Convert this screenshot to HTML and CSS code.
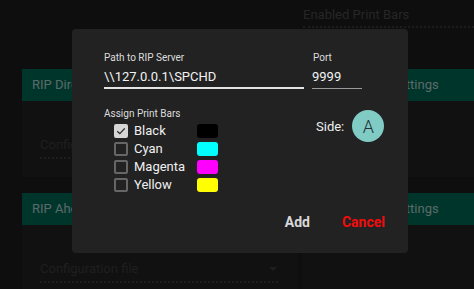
FILE: index.html
```html
<!DOCTYPE html>
<html lang="en">
<head>
  <meta charset="UTF-8" />
  <meta name="viewport" content="width=device-width, initial-scale=1.0"/>
  <title>RIP Settings</title>
  <link rel="stylesheet" href="styles.css">
</head>
<body>
  <!-- Conteúdo da página por trás do diálogo -->
  <div class="pagina">
    <div class="topo">
      <div class="campo-topo">Enabled Print Bars</div>
    </div>

    <div class="grade">
      <div class="cartao">
        <div class="cartao-titulo">RIP Directory</div>
        <div class="cartao-corpo">
          <div class="campo-fundo">Configuration file</div>
        </div>
      </div>
      <div class="cartao">
        <div class="cartao-titulo direita">Print Bar Settings</div>
        <div class="cartao-corpo"></div>
      </div>

      <div class="cartao">
        <div class="cartao-titulo">RIP Ahead Settings</div>
        <div class="cartao-corpo">
          <div class="campo-fundo">Configuration file <span class="seta"></span></div>
        </div>
      </div>
      <div class="cartao">
        <div class="cartao-titulo direita">Print Bar Settings</div>
        <div class="cartao-corpo"></div>
      </div>
    </div>
  </div>

  <!-- Fundo escurecido -->
  <div class="overlay"></div>

  <!-- Diálogo -->
  <div class="dialogo">
    <div class="linha-campos">
      <div class="campo campo-caminho">
        <label>Path to RIP Server</label>
        <div class="valor">\\127.0.0.1\SPCHD</div>
      </div>
      <div class="campo campo-porta">
        <label>Port</label>
        <div class="valor">9999</div>
      </div>
    </div>

    <div class="linha-barras">
      <div class="barras">
        <div class="barras-titulo">Assign Print Bars</div>
        <ul class="lista-barras">
          <li><span class="caixa marcada">
            <svg width="12" height="12" viewBox="0 0 12 12"><path d="M1.5 6.2 L4.6 9.2 L10.5 2.8" fill="none" stroke="#2a2a2a" stroke-width="1.6"/></svg>
          </span><span class="nome">Black</span><span class="cor" style="background:#000000"></span></li>
          <li><span class="caixa"></span><span class="nome">Cyan</span><span class="cor" style="background:#00ffff"></span></li>
          <li><span class="caixa"></span><span class="nome">Magenta</span><span class="cor" style="background:#ff00ff"></span></li>
          <li><span class="caixa"></span><span class="nome">Yellow</span><span class="cor" style="background:#ffff00"></span></li>
        </ul>
      </div>
      <div class="lado">
        <span>Side:</span>
        <span class="circulo">A</span>
      </div>
    </div>

    <div class="acoes">
      <button class="btn-add">Add</button>
      <button class="btn-cancelar">Cancel</button>
    </div>
  </div>
</body>
</html>
```

FILE: styles.css
```css
/* Estilo geral */
body {
  margin: 0;
  width: 474px;
  height: 289px;
  overflow: hidden;
  background-color: #1c1c1c;
  font-family: Roboto, "Liberation Sans", sans-serif;
  position: relative;
}

.pagina {
  padding-left: 22px;
}

/* Campo do topo à direita */
.topo {
  height: 69px;
  padding-left: 281px;
}

.campo-topo {
  padding-top: 6px;
  font-size: 13px;
  line-height: 18px;
  color: #4c4c4c;
  height: 20px;
  border-bottom: 2px dotted #3a3a3a;
}

/* Grade de cartões */
.grade {
  display: grid;
  grid-template-columns: 276px 200px;
  column-gap: 4px;
  row-gap: 16px;
}

.cartao {
  background-color: #222;
}

.cartao-titulo {
  height: 32px;
  line-height: 32px;
  padding-left: 10px;
  background-color: #006b58;
  color: #b4d4cf;
  font-size: 13px;
  white-space: nowrap;
  overflow: hidden;
}

.cartao-titulo.direita {
  padding-left: 36px;
}

.cartao-corpo {
  height: 76px;
  padding: 34px 20px 0 18px;
  box-sizing: border-box;
}

.campo-fundo {
  position: relative;
  font-size: 13px;
  line-height: 20px;
  color: #3e3e3e;
  border-bottom: 2px dotted #3a3a3a;
  height: 22px;
}

.seta {
  position: absolute;
  right: 1px;
  top: 8px;
  border-left: 4px solid transparent;
  border-right: 4px solid transparent;
  border-top: 4px solid #3e3e3e;
}

/* Camada escura */
.overlay {
  position: absolute;
  inset: 0;
  background-color: rgba(0, 0, 0, 0.5);
}

/* Diálogo */
.dialogo {
  position: absolute;
  left: 72px;
  top: 29px;
  width: 336px;
  height: 224px;
  box-sizing: border-box;
  padding: 22px 23px 0 32px;
  background-color: #222;
  border-radius: 4px;
  color: #eee;
}

.linha-campos {
  display: flex;
  gap: 8px;
}

.campo label {
  display: block;
  font-size: 10px;
  line-height: 13px;
  color: #ddd;
}

.campo .valor {
  margin-top: 3px;
  font-size: 13px;
  line-height: 20px;
  color: #f2f2f2;
}

.campo-caminho {
  width: 200px;
}

.campo-caminho .valor {
  border-bottom: 2px solid #e4e4e4;
}

.campo-porta {
  width: 50px;
}

.campo-porta label {
  padding-left: 1px;
}

.campo-porta .valor {
  border-bottom: 1px solid #9a9a9a;
  height: 21px;
}

/* Barras de impressão */
.linha-barras {
  display: flex;
  margin-top: 18px;
}

.barras {
  width: 212px;
}

.barras-titulo {
  font-size: 10px;
  line-height: 13px;
  color: #ddd;
}

.lista-barras {
  list-style: none;
  margin: 2px 0 0;
  padding: 0 0 0 10px;
}

.lista-barras li {
  display: grid;
  grid-template-columns: 14px 57px 21px;
  column-gap: 6px;
  align-items: center;
  height: 18px;
}

.caixa {
  width: 14px;
  height: 14px;
  box-sizing: border-box;
  border: 2px solid #666;
  border-radius: 2px;
  display: flex;
  align-items: center;
  justify-content: center;
}

.caixa.marcada {
  background-color: #d6d6d6;
  border-color: #d6d6d6;
}

.nome {
  font-size: 13px;
  line-height: 18px;
  color: #f0f0f0;
}

.cor {
  width: 21px;
  height: 14px;
  border-radius: 3px;
}

/* Lado */
.lado {
  display: flex;
  align-items: center;
  gap: 8px;
  height: 32px;
  margin-top: 3px;
  font-size: 13px;
  color: #eee;
}

.circulo {
  width: 32px;
  height: 32px;
  border-radius: 50%;
  background-color: #80cbc4;
  color: #263238;
  font-size: 18px;
  font-weight: 300;
  display: flex;
  align-items: center;
  justify-content: center;
}

/* Botões */
.acoes {
  display: flex;
  justify-content: flex-end;
  gap: 32px;
  margin-top: 18px;
}

button {
  padding: 0;
  border: none;
  background: none;
  font-family: Roboto, "Liberation Sans", sans-serif;
  font-size: 14px;
  font-weight: 700;
  line-height: 20px;
  cursor: pointer;
}

.btn-add {
  color: #d8d8d8;
}

.btn-cancelar {
  color: #f20d0d;
}
```
